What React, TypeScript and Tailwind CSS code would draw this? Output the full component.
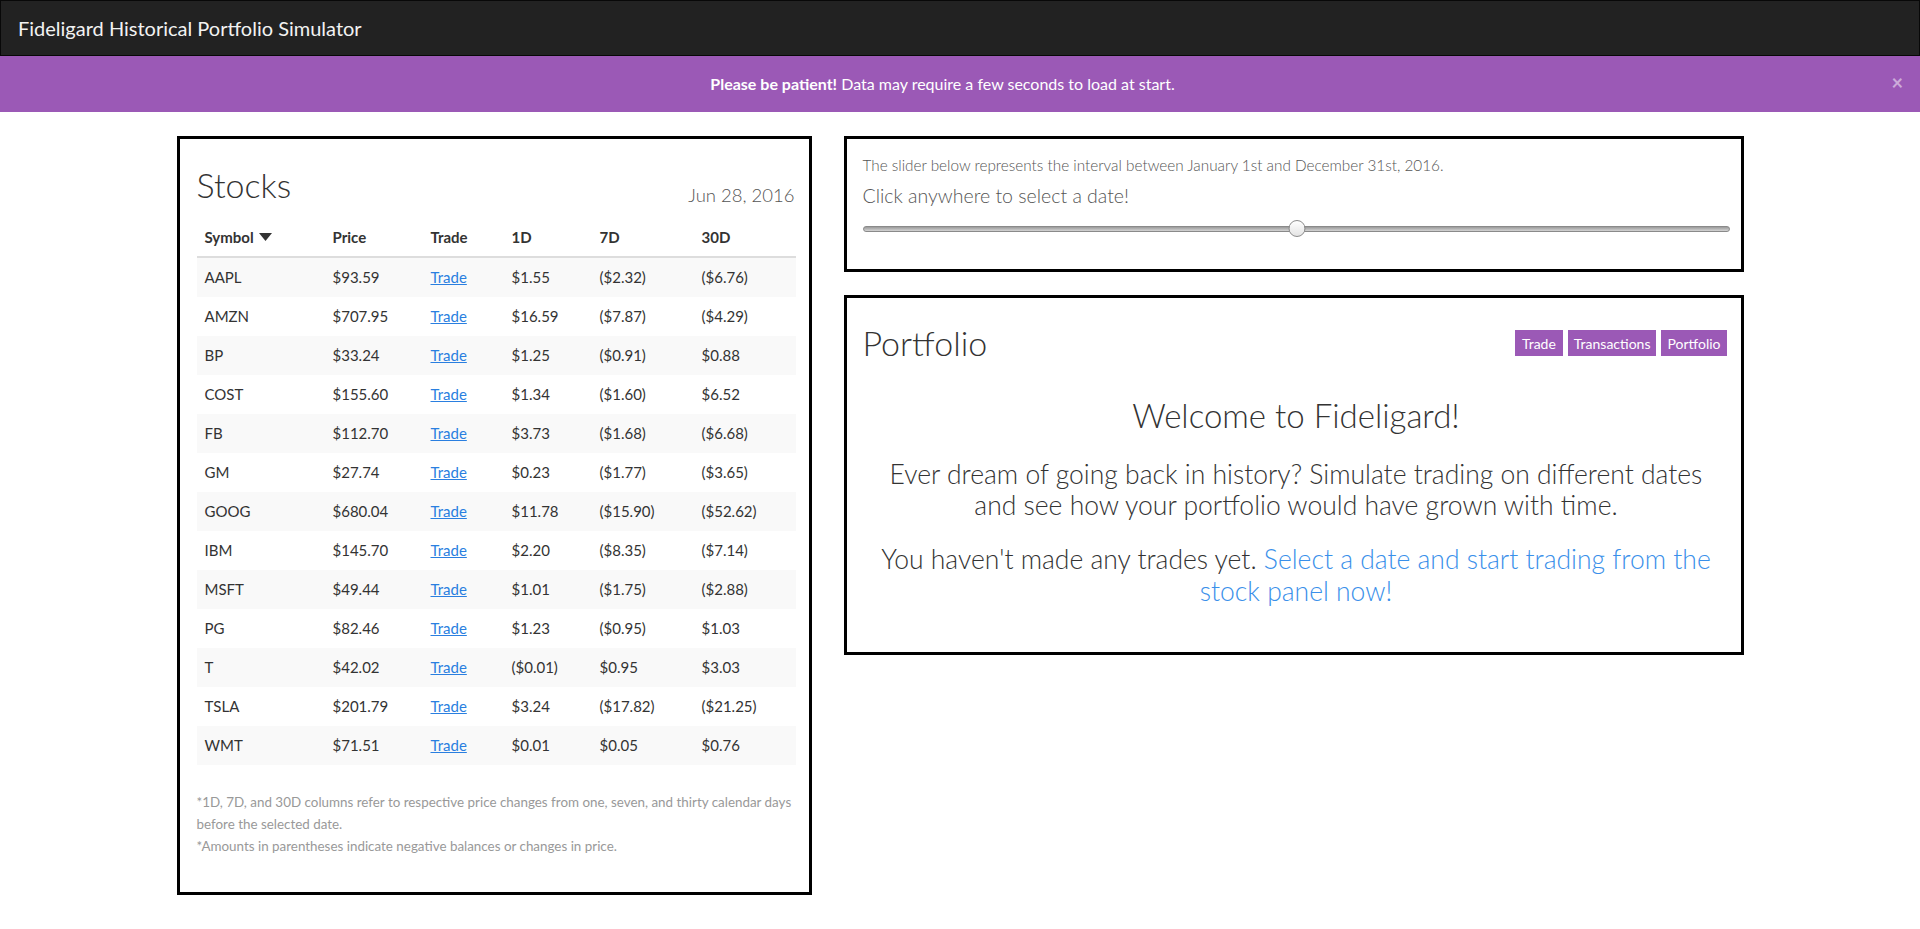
import React from 'react'

interface Stock {
  symbol: string
  price: string
  d1: string
  d7: string
  d30: string
}

const stocks: Stock[] = [
  { symbol: 'AAPL', price: '$93.59', d1: '$1.55', d7: '($2.32)', d30: '($6.76)' },
  { symbol: 'AMZN', price: '$707.95', d1: '$16.59', d7: '($7.87)', d30: '($4.29)' },
  { symbol: 'BP', price: '$33.24', d1: '$1.25', d7: '($0.91)', d30: '$0.88' },
  { symbol: 'COST', price: '$155.60', d1: '$1.34', d7: '($1.60)', d30: '$6.52' },
  { symbol: 'FB', price: '$112.70', d1: '$3.73', d7: '($1.68)', d30: '($6.68)' },
  { symbol: 'GM', price: '$27.74', d1: '$0.23', d7: '($1.77)', d30: '($3.65)' },
  { symbol: 'GOOG', price: '$680.04', d1: '$11.78', d7: '($15.90)', d30: '($52.62)' },
  { symbol: 'IBM', price: '$145.70', d1: '$2.20', d7: '($8.35)', d30: '($7.14)' },
  { symbol: 'MSFT', price: '$49.44', d1: '$1.01', d7: '($1.75)', d30: '($2.88)' },
  { symbol: 'PG', price: '$82.46', d1: '$1.23', d7: '($0.95)', d30: '$1.03' },
  { symbol: 'T', price: '$42.02', d1: '($0.01)', d7: '$0.95', d30: '$3.03' },
  { symbol: 'TSLA', price: '$201.79', d1: '$3.24', d7: '($17.82)', d30: '($21.25)' },
  { symbol: 'WMT', price: '$71.51', d1: '$0.01', d7: '$0.05', d30: '$0.76' },
]

function Navbar() {
  return (
    <div className="h-[56px] bg-[#222222] border border-[#080808] flex items-center px-[17px]">
      <span className="text-[20px] text-[#f2f2f2]">Fideligard Historical Portfolio Simulator</span>
    </div>
  )
}

function Notice() {
  return (
    <div className="relative h-[56px] bg-[#9b59b6] flex items-center justify-center pr-[35px] text-white text-[16px]">
      <p>
        <span className="font-bold">Please be patient!</span> Data may require a few seconds to load at start.
      </p>
      <button
        type="button"
        className="absolute right-[17px] top-[16px] text-[20px] font-bold leading-none text-white/50"
      >
        ×
      </button>
    </div>
  )
}

function StockPanel() {
  return (
    <div className="w-[635px] border-[3px] border-black pl-[17px] pr-[13px] pt-[26px] pb-[35px] text-[#333333]">
      <div className="flex items-end justify-between">
        <h1 className="text-[34px] font-light leading-[40px]">Stocks</h1>
        <span className="text-[18.5px] font-light text-[#555555] leading-[24px] mr-[1px] mb-[-2px]">Jun 28, 2016</span>
      </div>
      <table className="mt-[13px] w-[599px] table-fixed border-collapse text-[15px]">
        <colgroup>
          <col className="w-[128px]" />
          <col className="w-[98px]" />
          <col className="w-[81px]" />
          <col className="w-[88px]" />
          <col className="w-[102px]" />
          <col className="w-[102px]" />
        </colgroup>
        <thead>
          <tr className="border-b-2 border-[#dddddd] text-left font-bold">
            <th className="px-[8px] py-[8px] leading-[22px]">
              <span className="inline-flex items-center gap-[5px]">
                Symbol
                <svg width="13" height="8" viewBox="0 0 13 8">
                  <path d="M0 0 L13 0 L6.5 8 Z" fill="#333333" />
                </svg>
              </span>
            </th>
            <th className="px-[8px] py-[8px] leading-[22px]">Price</th>
            <th className="px-[8px] py-[8px] leading-[22px]">Trade</th>
            <th className="px-[8px] py-[8px] leading-[22px]">1D</th>
            <th className="px-[8px] py-[8px] leading-[22px]">7D</th>
            <th className="px-[8px] py-[8px] leading-[22px]">30D</th>
          </tr>
        </thead>
        <tbody>
          {stocks.map((s, i) => (
            <tr key={s.symbol} className={i % 2 === 0 ? 'bg-[#f9f9f9]' : 'bg-white'}>
              <td className="px-[8px] py-[8px] leading-[23px]">{s.symbol}</td>
              <td className="px-[8px] py-[8px] leading-[23px]">{s.price}</td>
              <td className="px-[8px] py-[8px] leading-[23px]">
                <a href="#" className="text-[#2a7fe0] underline">
                  Trade
                </a>
              </td>
              <td className="px-[8px] py-[8px] leading-[23px]">{s.d1}</td>
              <td className="px-[8px] py-[8px] leading-[23px]">{s.d7}</td>
              <td className="px-[8px] py-[8px] leading-[23px]">{s.d30}</td>
            </tr>
          ))}
        </tbody>
      </table>
      <div className="mt-[26px] text-[13.4px] leading-[22px] text-[#999999]">
        <p>*1D, 7D, and 30D columns refer to respective price changes from one, seven, and thirty calendar days before the selected date.</p>
        <p>*Amounts in parentheses indicate negative balances or changes in price.</p>
      </div>
    </div>
  )
}

function SliderPanel() {
  return (
    <div className="border-[3px] border-black pl-[16px] pr-[11px] pt-[16px] pb-[32px] text-[#555555]">
      <p className="text-[15.3px] font-light leading-[20px]">
        The slider below represents the interval between January 1st and December 31st, 2016.
      </p>
      <p className="mt-[9px] text-[19.5px] font-light leading-[24px]">Click anywhere to select a date!</p>
      <div className="relative mt-[13px] h-[16px] flex items-center">
        <div className="h-[6px] w-full rounded-full border border-[#8a8a8a] bg-gradient-to-b from-[#9a9a9a] to-[#d4d4d4]" />
        <div className="absolute left-[50.1%] -translate-x-1/2 top-[-1px] h-[17px] w-[17px] rounded-full border border-[#8c8c8c] bg-gradient-to-b from-white to-[#e4e4e4]" />
      </div>
    </div>
  )
}

function PortfolioPanel() {
  return (
    <div className="mt-[23px] border-[3px] border-black pl-[16px] pr-[11px] pt-[25px] pb-[45px] text-[#333333]">
      <div className="flex items-center justify-between pr-[3px]">
        <h2 className="text-[34px] font-light leading-[40px]">Portfolio</h2>
        <div className="flex gap-[5px] text-[14px] text-white">
          <button type="button" className="bg-[#9b59b6] h-[26px] px-[7px]">Trade</button>
          <button type="button" className="bg-[#9b59b6] h-[26px] px-[6px]">Transactions</button>
          <button type="button" className="bg-[#9b59b6] h-[26px] px-[6px]">Portfolio</button>
        </div>
      </div>
      <div className="text-center font-light">
        <h3 className="mt-[32px] text-[33px] leading-[40px]">Welcome to Fideligard!</h3>
        <p className="mt-[24px] px-[14px] text-[26.5px] leading-[31px]">
          Ever dream of going back in history? Simulate trading on different dates and see how your portfolio would have grown with time.
        </p>
        <p className="mt-[22px] px-[10px] text-[26.5px] leading-[32px]">
          You haven't made any trades yet.{' '}
          <a href="#" className="text-[#3a90ea]">
            Select a date and start trading from the stock panel now!
          </a>
        </p>
      </div>
    </div>
  )
}

export default function App() {
  return (
    <div className="min-h-screen bg-white font-[Lato,'Liberation_Sans',sans-serif]">
      <Navbar />
      <Notice />
      <div className="flex justify-center gap-[32px] pt-[24px] pb-[32px]">
        <StockPanel />
        <div className="w-[900px] self-start">
          <SliderPanel />
          <PortfolioPanel />
        </div>
      </div>
    </div>
  )
}
